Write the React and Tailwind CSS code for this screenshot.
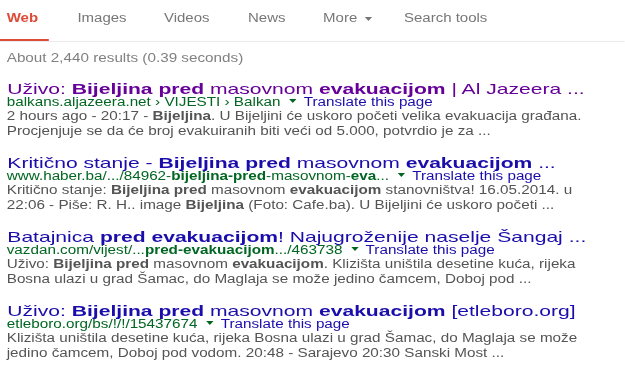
const B = ({ children }) => <b className="font-bold">{children}</b>;

const Translate = () => (
  <>
    <span className="inline-block align-middle ml-[7px] mr-[6px] w-0 h-0 border-l-[3px] border-r-[3px] border-t-[4px] border-l-transparent border-r-transparent border-t-[#006621] relative top-[-1px]" />
    <span className="text-[#1a0dab]">Translate this page</span>
  </>
);

const Result = ({ visited, title, url, s1, s2 }) => (
  <div>
    <div
      className={
        "origin-left scale-x-[1.152] whitespace-nowrap text-[15px] leading-[14px] " +
        (visited ? "text-[#660099]" : "text-[#1a0dab]")
      }
    >
      {title}
    </div>
    <div className="whitespace-nowrap text-[12.5px] leading-[13px] text-[#006621]">{url}</div>
    <div className="whitespace-nowrap text-[12.5px] leading-[15px] text-[#545454]">{s1}</div>
    <div className="whitespace-nowrap text-[12.5px] leading-[15px] text-[#545454]">{s2}</div>
  </div>
);

export default function App() {
  return (
    <div className="w-[625px] h-[366px] overflow-hidden bg-white font-['Liberation_Sans',Arial,sans-serif]">
      <div className="origin-top-left scale-x-[1.22] w-[512.3px]">
        <div className="flex h-[42px] pb-[4px] border-b border-[#ebebeb] text-[12.3px] text-[#777]">
          <div className="relative pl-[5.5px] pr-[9px] flex items-center text-[#dd4b39] font-bold">
            Web
            <div className="absolute left-0 right-0 bottom-[-4px] h-[2px] bg-[#dd4b39]" />
          </div>
          <div className="ml-[23.2px] flex items-center">Images</div>
          <div className="ml-[30.6px] flex items-center">Videos</div>
          <div className="ml-[31.5px] flex items-center">News</div>
          <div className="ml-[30.8px] flex items-center">
            More
            <span className="inline-block ml-[6.4px] w-0 h-0 border-l-[3px] border-r-[3px] border-t-[4px] border-l-transparent border-r-transparent border-t-[#777]" />
          </div>
          <div className="ml-[25.9px] flex items-center">Search tools</div>
        </div>
        <div className="pl-[5.5px] pt-[9px] text-[12.5px] leading-[15px] text-[#808080] whitespace-nowrap">
          About 2,440 results (0.39 seconds)
        </div>
        <div className="pl-[5.5px] pt-[15.6px] flex flex-col gap-[17px]">
          <Result
            visited
            title={<>Uživo: <B>Bijeljina pred</B> masovnom <B>evakuacijom</B> | Al Jazeera ...</>}
            url={<>balkans.aljazeera.net › VIJESTI › Balkan<Translate /></>}
            s1={<>2 hours ago - 20:17 - <B>Bijeljina</B>. U Bijeljini će uskoro početi velika evakuacija građana.</>}
            s2={<>Procjenjuje se da će broj evakuiranih biti veći od 5.000, potvrdio je za ...</>}
          />
          <Result
            title={<>Kritično stanje - <B>Bijeljina pred</B> masovnom <B>evakuacijom</B> ...</>}
            url={<>www.haber.ba/.../84962-<B>bijeljina-pred</B>-masovnom-<B>eva</B>...<Translate /></>}
            s1={<>Kritično stanje: <B>Bijeljina pred</B> masovnom <B>evakuacijom</B> stanovništva! 16.05.2014. u</>}
            s2={<>22:06 - Piše: R. H.. image <B>Bijeljina</B> (Foto: Cafe.ba). U Bijeljini će uskoro početi ...</>}
          />
          <Result
            title={<>Batajnica <B>pred evakuacijom</B>! Najugroženije naselje Šangaj ...</>}
            url={<>vazdan.com/vijest/...<B>pred-evakuacijom</B>.../463738<Translate /></>}
            s1={<>Uživo: <B>Bijeljina pred</B> masovnom <B>evakuacijom</B>. Klizišta uništila desetine kuća, rijeka</>}
            s2={<>Bosna ulazi u grad Šamac, do Maglaja se može jedino čamcem, Doboj pod ...</>}
          />
          <Result
            title={<>Uživo: <B>Bijeljina pred</B> masovnom <B>evakuacijom</B> [etleboro.org]</>}
            url={<>etleboro.org/bs/!/!/15437674<Translate /></>}
            s1={<>Klizišta uništila desetine kuća, rijeka Bosna ulazi u grad Šamac, do Maglaja se može</>}
            s2={<>jedino čamcem, Doboj pod vodom. 20:48 - Sarajevo 20:30 Sanski Most ...</>}
          />
        </div>
      </div>
    </div>
  );
}
